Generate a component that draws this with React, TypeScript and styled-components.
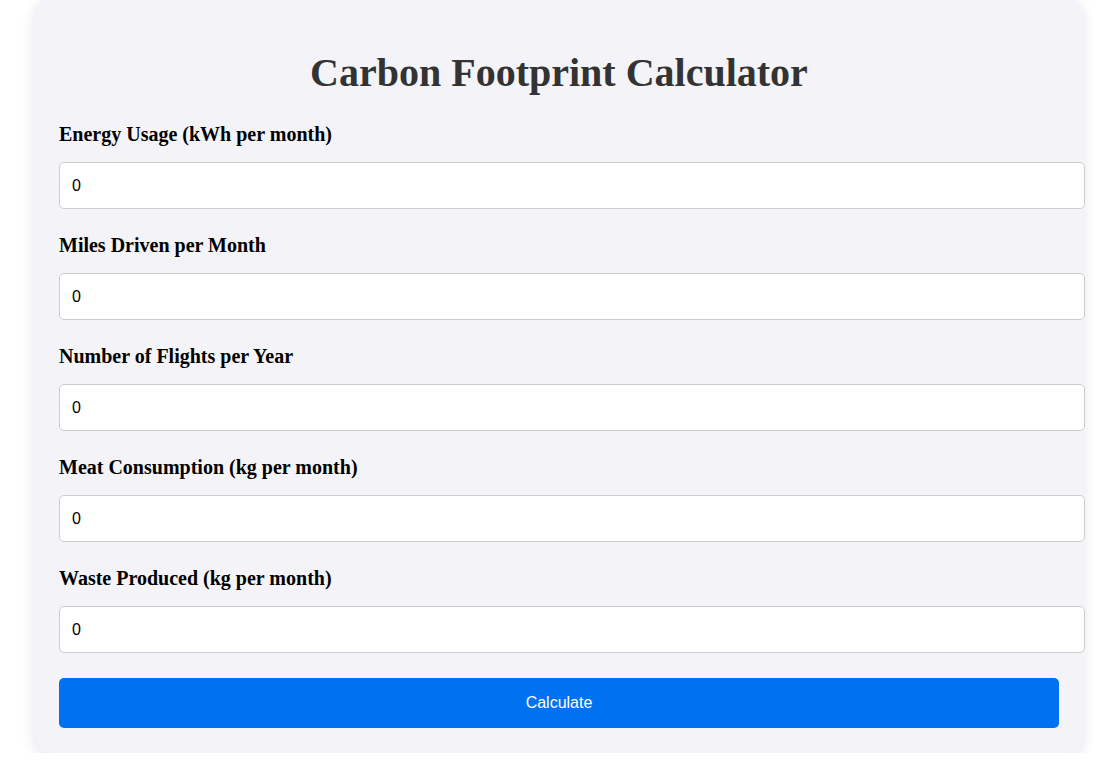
import React, { useState } from 'react';
import styled, { createGlobalStyle } from 'styled-components';

interface Field {
  key: string;
  label: string;
}

const fields: Field[] = [
  { key: 'energy', label: 'Energy Usage (kWh per month)' },
  { key: 'miles', label: 'Miles Driven per Month' },
  { key: 'flights', label: 'Number of Flights per Year' },
  { key: 'meat', label: 'Meat Consumption (kg per month)' },
  { key: 'waste', label: 'Waste Produced (kg per month)' },
];

const App: React.FC = () => {
  const [values, setValues] = useState<Record<string, string>>({
    energy: '0',
    miles: '0',
    flights: '0',
    meat: '0',
    waste: '0',
  });

  const handleChange = (key: string) => (e: React.ChangeEvent<HTMLInputElement>) => {
    setValues({ ...values, [key]: e.target.value });
  };

  return (
    <>
      <GlobalStyle />
      <Page>
        <Card>
          <Title>Carbon Footprint Calculator</Title>
          {fields.map(field => (
            <FormGroup key={field.key}>
              <Label htmlFor={field.key}>{field.label}</Label>
              <Input
                id={field.key}
                type="number"
                value={values[field.key]}
                onChange={handleChange(field.key)}
              />
            </FormGroup>
          ))}
          <Button type="button">Calculate</Button>
        </Card>
      </Page>
    </>
  );
};

const GlobalStyle = createGlobalStyle`
  body {
    margin: 0;
    background: #ffffff;
    font-family: "Liberation Serif", "Times New Roman", serif;
  }
`;

const Page = styled.div`
  display: flex;
  justify-content: center;
  padding-left: 6px;
`;

const Card = styled.div`
  width: 1050px;
  box-sizing: border-box;
  margin-top: -3px;
  padding: 25px;
  background: #f4f4f8;
  border-radius: 18px;
  box-shadow: 0 4px 14px rgba(0, 0, 0, 0.1);
`;

const Title = styled.h1`
  font-size: 40px;
  margin: 26.8px 0;
  text-align: center;
  color: #333333;
  font-weight: bold;
`;

const FormGroup = styled.div`
  margin-bottom: 25px;
`;

const Label = styled.label`
  display: block;
  font-size: 20px;
  line-height: 23px;
  font-weight: bold;
  color: #000000;
  margin-bottom: 16px;
`;

const Input = styled.input`
  display: block;
  width: 100%;
  box-sizing: content-box;
  padding: 14px 12px;
  line-height: 17px;
  font-size: 16px;
  font-family: "Liberation Sans", Arial, sans-serif;
  color: #000000;
  background: #ffffff;
  border: 1px solid #cccccc;
  border-radius: 5px;
  outline: none;
  appearance: textfield;
  -moz-appearance: textfield;

  &::-webkit-outer-spin-button,
  &::-webkit-inner-spin-button {
    -webkit-appearance: none;
    margin: 0;
  }
`;

const Button = styled.button`
  display: block;
  width: 100%;
  padding: 16px;
  line-height: 18px;
  font-size: 16px;
  font-family: "Liberation Sans", Arial, sans-serif;
  color: #ffffff;
  background: #0071f0;
  border: none;
  border-radius: 5px;
  cursor: pointer;
`;

export default App;
